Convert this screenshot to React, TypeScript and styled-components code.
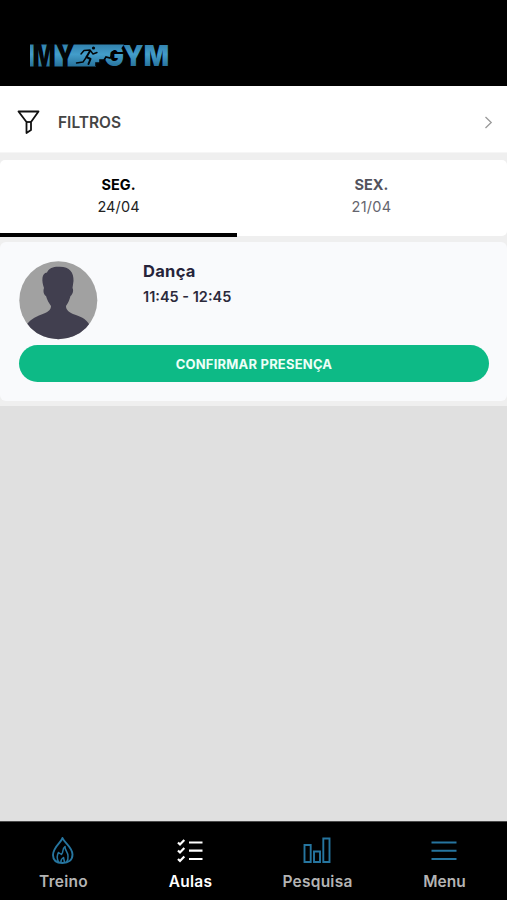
import React from "react";
import styled, { createGlobalStyle } from "styled-components";

const GlobalStyle = createGlobalStyle`
  * { box-sizing: border-box; }
  body { margin: 0; background: #e0e0e0; font-family: Inter, "Liberation Sans", sans-serif; }
  button { font-family: inherit; border: 0; padding: 0; background: none; cursor: pointer; }
`;

const Screen = styled.div`
  display: flex;
  flex-direction: column;
  width: 100%;
  height: 900px;
  background: #e0e0e0;
`;

const Header = styled.header`
  height: 86px;
  padding: 32px 0 0 28px;
  background: #000;
  svg { display: block; }
`;

const Content = styled.main`
  flex: 1;
`;

const Sheet = styled.div`
  display: flex;
  flex-direction: column;
  height: 320px;
  background: #efefef;
`;

const FilterRow = styled.button`
  display: flex;
  align-items: center;
  width: 100%;
  height: 67px;
  padding: 6px 12px 0 17px;
  background: #fff;
  border-bottom: 1px solid #f6f6f6;
  svg { display: block; flex: none; }
`;

const Label = styled.span<{ $size: number; $weight: number; $color: string; $spacing?: number; $line?: number }>`
  font-size: ${(p) => p.$size}px;
  font-weight: ${(p) => p.$weight};
  color: ${(p) => p.$color};
  letter-spacing: ${(p) => p.$spacing ?? 0}px;
  line-height: ${(p) => p.$line ?? 22}px;
  white-space: nowrap;
`;

const FilterLabel = styled(Label)`
  flex: 1;
  margin-left: 18px;
  padding-top: 2px;
  text-align: left;
`;

const Tabs = styled.div`
  display: flex;
  height: 76px;
  margin-top: 7px;
  background: #fff;
  border-radius: 5px;
`;

const Tab = styled.button<{ $active?: boolean }>`
  display: flex;
  flex-direction: column;
  align-items: center;
  width: ${(p) => (p.$active ? "237px" : "269px")};
  height: 77px;
  padding-top: 14px;
  border-bottom: ${(p) => (p.$active ? "4px solid #000" : "0")};
`;

const ClassCard = styled.article`
  height: 159px;
  margin-top: 6px;
  padding: 19px 18px 0 19px;
  background: #f9fafc;
  border-radius: 6px;
`;

const ClassInfo = styled.div`
  display: flex;
  height: 84px;
  svg { display: block; flex: none; }
`;

const ClassText = styled.div`
  display: flex;
  flex-direction: column;
  margin: -1px 0 0 45px;
`;

const ConfirmButton = styled.button`
  display: flex;
  align-items: center;
  justify-content: center;
  width: 100%;
  height: 37px;
  border-radius: 19px;
  background: #0dba86;
`;

const BottomNav = styled.nav`
  display: grid;
  grid-template-columns: repeat(4, 127px);
  height: 79px;
  background: #000;
  border-top: 1px solid #4a4a4a;
`;

const NavItem = styled.button`
  display: flex;
  flex-direction: column;
  align-items: center;
  padding-top: 14px;
  svg { display: block; margin: 0 1px 6px 0; }
`;

const Logo = () => (
  <svg width="150" height="50" viewBox="0 -10 150 50" role="img" aria-label="MY GYM">
    <defs>
      <linearGradient id="brand" gradientUnits="userSpaceOnUse" x1="0" y1="2" x2="0" y2="25">
        <stop offset="0" stopColor="#3181ad" />
        <stop offset="0.45" stopColor="#439dca" />
        <stop offset="1" stopColor="#267099" />
      </linearGradient>
    </defs>
    <path d="M2 2.500H96L92 8H86L79 12L77 15V18H72V21H68V24.500H2Z" fill="url(#brand)" />
    <g fontFamily="Inter, sans-serif" fontWeight="900">
      <text x="4.500" y="25" fontSize="31" fill="#020507" textLength="42" lengthAdjust="spacingAndGlyphs">MY</text>
      <text x="76" y="24.300" fontSize="29" fill="url(#brand)" textLength="65" lengthAdjust="spacingAndGlyphs">GYM</text>
    </g>
    <path d="M68 24V21H72V18H76L78 15L82 16L85 12" fill="none" stroke="#020507" strokeWidth="1.600" />
    <g fill="none" stroke="#020507" strokeWidth="1.400" strokeLinejoin="round" strokeLinecap="round">
      <path d="M53 12L56 8.500L62 8L65 12L69 10.500" />
      <path d="M62 9L58.500 15L62.500 17L60.500 22" strokeWidth="2" />
      <path d="M58.500 15L55 20L48.500 21" />
    </g>
    <circle cx="65.500" cy="6" r="1.600" fill="#020507" />
  </svg>
);

const FilterIcon = () => (
  <svg width="23" height="25" viewBox="0 0 23 25" fill="none" stroke="#111" strokeWidth="1.800" strokeLinejoin="round">
    <path d="M1.500 1.500H21.500L14 12V20L9.500 23V12Z" />
    <path d="M9 12H14" />
  </svg>
);

const Chevron = () => (
  <svg width="12" height="14" viewBox="0 0 12 14" fill="none" stroke="#999" strokeWidth="1.300">
    <path d="M2.500 2L8.200 7.500L2.500 13" />
  </svg>
);

const Avatar = () => (
  <svg width="79" height="79" viewBox="0 0 79 79">
    <defs>
      <clipPath id="avatar"><circle cx="39.300" cy="39.300" r="39" /></clipPath>
    </defs>
    <g clipPath="url(#avatar)">
      <rect width="79" height="79" fill="#a1a1a1" />
      <path
        fill="#413f4f"
        d="M25 27C22.500 20 22.500 12 28 11.500C30 7 34 6 39 5.800C50 5 55 11 54.500 20L53.500 27C55 29 53.500 34 51.500 35C50.500 39 49 42 47 45C47 49 50 51 54 53C62 55.500 67 58 70 63L70 79H8L8 63C12 58 18 55 25 52.500C30 50.500 32 48 32 45C30 42 28 39 27 35C24.500 34 24 29 25 27Z"
      />
    </g>
  </svg>
);

const FlameIcon = () => (
  <svg width="24" height="29" viewBox="0 0 24 29" fill="none" stroke="#26759f" strokeWidth="1.900" strokeLinejoin="round" strokeLinecap="round">
    <path d="M11.500 2C10.500 6 2 11 2 19C2 24.500 6 27 11.500 27C17.500 27 21.500 24 21.500 18.500C21.500 11 13.500 7 11.500 2Z" />
    <path d="M7.500 26C5.500 22 6 19 7.500 16.500L10.500 18.500C13 16.500 10.500 13 14 10.500C13.500 14 17 16 17 20C17.300 23 17 24.500 15.500 26M10 26C9.500 23.500 11 22.500 12.500 21.500L13.500 26" strokeWidth="1.500" />
  </svg>
);

const ChecklistIcon = () => (
  <svg width="26" height="29" viewBox="0 0 26 29" fill="none" stroke="#fff" strokeWidth="2.200">
    <path d="M1 6.500L3 8.500L7.300 4M1 14.500L3 16.500L7.300 12M1 23L3 25L7.300 20.500" />
    <path d="M12 6.500H25.500M12 14.700H25.500M12 23H25.500" />
  </svg>
);

const ChartIcon = () => (
  <svg width="28" height="29" viewBox="0 0 28 29" fill="none" stroke="#26759f" strokeWidth="1.900">
    <path d="M1.500 9H7.700V26H1.500ZM11 15.500H17V26H11ZM20.300 2.500H26.500V26H20.300Z" />
  </svg>
);

const MenuIcon = () => (
  <svg width="26" height="29" viewBox="0 0 26 29" stroke="#26759f" strokeWidth="2">
    <path d="M.5 6.500H25.500M.5 14.700H25.500M.5 23H25.500" />
  </svg>
);

const navItems = [
  { label: "Treino", icon: <FlameIcon />, spacing: 0.25 },
  { label: "Aulas", icon: <ChecklistIcon />, active: true, spacing: 0.25 },
  { label: "Pesquisa", icon: <ChartIcon />, spacing: 0.25 },
  { label: "Menu", icon: <MenuIcon />, spacing: 0 },
];

export default function App() {
  return (
    <Screen>
      <GlobalStyle />
      <Header><Logo /></Header>
      <Content>
        <Sheet>
          <FilterRow>
            <FilterIcon />
            <FilterLabel $size={15.5} $weight={600} $color="#454545" $spacing={0}>FILTROS</FilterLabel>
            <Chevron />
          </FilterRow>
          <Tabs>
            <Tab $active>
              <Label $size={14.5} $weight={700} $color="#000">SEG.</Label>
              <Label $size={14.5} $weight={400} $color="#222" $spacing={0.1}>24/04</Label>
            </Tab>
            <Tab>
              <Label $size={14.5} $weight={700} $color="#53535c">SEX.</Label>
              <Label $size={14.5} $weight={400} $color="#65656e" $spacing={0.3}>21/04</Label>
            </Tab>
          </Tabs>
          <ClassCard>
            <ClassInfo>
              <Avatar />
              <ClassText>
                <Label $size={16.5} $weight={700} $color="#26243a" $spacing={0.3}>Dança</Label>
                <Label $size={14.5} $weight={600} $color="#2b293b" $line={30}>11:45 - 12:45</Label>
              </ClassText>
            </ClassInfo>
            <ConfirmButton>
              <Label $size={13} $weight={700} $color="#edfff8" $spacing={0.2}>CONFIRMAR PRESENÇA</Label>
            </ConfirmButton>
          </ClassCard>
        </Sheet>
      </Content>
      <BottomNav>
        {navItems.map((item) => (
          <NavItem key={item.label}>
            {item.icon}
            <Label $size={15.5} $weight={600} $color={item.active ? "#fff" : "#b4b4b4"} $spacing={item.spacing}>
              {item.label}
            </Label>
          </NavItem>
        ))}
      </BottomNav>
    </Screen>
  );
}
